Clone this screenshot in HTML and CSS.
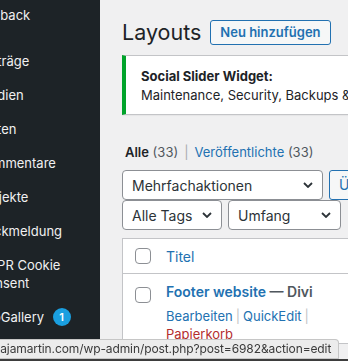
FILE: index.html
```html
<!DOCTYPE html>
<html lang="de">
  <head>
    <meta charset="UTF-8" />
    <meta name="viewport" content="width=device-width, initial-scale=1.0" />
    <title>Layouts ‹ Divi</title>
    <link rel="stylesheet" href="styles.css">
  </head>
  <body>
    <div class="admin">
      <nav class="sidebar">
        <ul class="menu">
          <li class="menu__item">Rollback</li>
          <li class="menu__separator"></li>
          <li class="menu__item">Beiträge</li>
          <li class="menu__item">Medien</li>
          <li class="menu__item">Seiten</li>
          <li class="menu__item">Kommentare</li>
          <li class="menu__item">Projekte</li>
          <li class="menu__item">Rückmeldung</li>
          <li class="menu__item menu__item--wrap">GDPR Cookie Consent</li>
          <li class="menu__item">FooGallery <span class="badge">1</span></li>
        </ul>
      </nav>

      <main class="content">
        <div class="title-row">
          <h1 class="title">Layouts</h1>
          <a href="#" class="page-title-action">Neu hinzufügen</a>
        </div>

        <div class="notice">
          <p class="notice__text"><strong>Social Slider Widget:</strong></p>
          <p class="notice__text">Maintenance, Security, Backups &amp; Performance</p>
        </div>

        <ul class="subsubsub">
          <li><a href="#" class="current">Alle</a> <span class="count">(33)</span></li>
          <li class="sep">|</li>
          <li><a href="#">Veröffentlichte</a> <span class="count">(33)</span></li>
        </ul>

        <div class="tablenav">
          <div class="tablenav__row">
            <div class="select select--bulk">
              <span>Mehrfachaktionen</span>
              <svg class="chevron" viewBox="0 0 10 6" width="10" height="6"><path d="M1 1l4 4 4-4" /></svg>
            </div>
            <a href="#" class="button">Übernehmen</a>
          </div>
          <div class="tablenav__row">
            <div class="select select--tags">
              <span>Alle Tags</span>
              <svg class="chevron" viewBox="0 0 10 6" width="10" height="6"><path d="M1 1l4 4 4-4" /></svg>
            </div>
            <div class="select select--scope">
              <span>Umfang</span>
              <svg class="chevron" viewBox="0 0 10 6" width="10" height="6"><path d="M1 1l4 4 4-4" /></svg>
            </div>
          </div>
        </div>

        <table class="list-table">
          <thead>
            <tr>
              <td class="check-column"><span class="checkbox"></span></td>
              <th class="column-title"><a href="#">Titel</a></th>
              <th class="column-author">Autor</th>
            </tr>
          </thead>
          <tbody>
            <tr>
              <td class="check-column"><span class="checkbox checkbox--row"></span></td>
              <td class="column-title">
                <strong><a href="#" class="row-title">Footer website</a> — Divi</strong>
                <div class="row-actions">
                  <a href="#">Bearbeiten</a><span class="sep">|</span><a href="#">QuickEdit</a><span class="sep">|</span> <a href="#" class="trash">Papierkorb</a>
                </div>
              </td>
              <td class="column-author">admin</td>
            </tr>
          </tbody>
        </table>
      </main>
    </div>

    <div class="status-bubble">
      <span>sajamartin.com/wp-admin/post.php?post=6982&amp;action=edit</span>
    </div>
  </body>
</html>
```

FILE: styles.css
```css
html,
body {
  height: 100%;
}

body {
  margin: 0;
  font-family: "Inter", "Liberation Sans", Arial, sans-serif;
  font-size: 13px;
  color: #3c434a;
  background: #f0f0f1;
  overflow: hidden;
}

a {
  color: #2271b1;
  text-decoration: none;
}

.admin {
  display: flex;
  height: 100%;
}

/* sidebar, scrolled so the icons are out of view */
.sidebar {
  flex: 0 0 100px;
  background: #1d2327;
  overflow: hidden;
}

.menu {
  list-style: none;
  margin: -2px 0 0 -22px;
  padding: 0;
  width: 150px;
}

.menu__item {
  padding: 8px 0;
  font-size: 13px;
  line-height: 18px;
  color: #f0f0f1;
  white-space: nowrap;
}

.menu__item--wrap {
  white-space: normal;
  width: 100px;
}

.menu__separator {
  height: 12px;
}

.badge {
  display: inline-block;
  width: 18px;
  height: 18px;
  margin-left: 5px;
  border-radius: 50%;
  background: #1a9fe0;
  color: #fff;
  font-size: 11px;
  font-weight: 600;
  line-height: 18px;
  text-align: center;
  vertical-align: top;
}

/* main column */
.content {
  flex: 0 0 440px;
  padding: 20px 0 0 22px;
}

.title-row {
  display: flex;
  align-items: center;
  gap: 9px;
  height: 24px;
}

.title {
  margin: 0;
  font-size: 21.5px;
  font-weight: 400;
  line-height: 24px;
  color: #1d2327;
}

.page-title-action {
  display: inline-block;
  padding: 0 9px;
  height: 23px;
  line-height: 23px;
  border: 1px solid #2271b1;
  border-radius: 3px;
  background: #f6f7f7;
  font-size: 13px;
  font-weight: 600;
}

.notice {
  margin-top: 11px;
  padding: 11px 12px 9px 15px;
  background: #fff;
  border: 1px solid #c3c4c7;
  border-left: 4px solid #00a32a;
  box-shadow: 0 1px 1px rgba(0, 0, 0, 0.04);
  white-space: nowrap;
}

.notice__text {
  margin: 0;
  line-height: 19px;
  color: #1d2327;
}

.subsubsub {
  display: flex;
  gap: 6px;
  list-style: none;
  margin: 24px 0 0;
  padding: 0 0 0 3px;
  line-height: 26px;
  font-size: 13px;
}

.subsubsub .current {
  color: #1d2327;
  font-weight: 600;
}

.subsubsub .count {
  color: #50575e;
}

.subsubsub .sep {
  color: #a7aaad;
}

.tablenav {
  margin-top: 5px;
}

.tablenav__row {
  display: flex;
  gap: 6px;
}

.select {
  display: flex;
  align-items: center;
  justify-content: space-between;
  box-sizing: border-box;
  height: 30px;
  padding: 0 9px 0 9px;
  background: #fff;
  border: 1px solid #8c8f94;
  border-radius: 4px;
  font-size: 14px;
  color: #2c3338;
}

.select--bulk {
  width: 201px;
}

.select--tags {
  width: 100px;
}

.select--scope {
  width: 113px;
}

.chevron {
  fill: none;
  stroke: #2c3338;
  stroke-width: 1.8;
}

.button {
  box-sizing: border-box;
  height: 30px;
  padding: 0 9px;
  line-height: 28px;
  border: 1px solid #2271b1;
  border-radius: 3px;
  background: #f6f7f7;
  font-size: 14px;
  white-space: nowrap;
}

.list-table {
  margin-top: 8px;
  width: 420px;
  border-collapse: collapse;
  background: #fff;
  border: 1px solid #c3c4c7;
  font-size: 14px;
}

.list-table th,
.list-table td {
  padding: 0;
  text-align: left;
  font-weight: 400;
  vertical-align: top;
}

.list-table thead tr {
  height: 35px;
  border-bottom: 1px solid #c3c4c7;
}

.list-table thead th,
.list-table thead td {
  vertical-align: middle;
}

.check-column {
  width: 16px;
  padding-left: 12px !important;
  padding-right: 15px !important;
}

.checkbox {
  display: block;
  box-sizing: border-box;
  width: 16px;
  height: 16px;
  border: 1px solid #8c8f94;
  border-radius: 4px;
  background: #fff;
}

.checkbox--row {
  margin-top: 13px;
}

.column-title {
  width: 160px;
}

.list-table tbody td {
  padding-top: 8px;
}

.list-table tbody .check-column {
  padding-top: 0;
}

.column-title strong {
  display: block;
  line-height: 20px;
  color: #50575e;
  font-weight: 600;
  white-space: nowrap;
}

.row-title {
  font-weight: 600;
}

.row-actions {
  margin-top: 5px;
  font-size: 13px;
  line-height: 18px;
}

.row-actions .sep {
  margin: 0 3px;
  color: #c3c4c7;
}

.row-actions .trash {
  color: #b32d2e;
}

.column-author {
  padding-left: 40px !important;
  color: #2271b1;
}

/* browser link preview in the bottom corner */
.status-bubble {
  position: fixed;
  left: 0;
  bottom: 2px;
  width: 339px;
  height: 20px;
  box-sizing: border-box;
  overflow: hidden;
  background: #ececec;
  border: 1px solid #c6c6c6;
  border-left: none;
  border-top-right-radius: 4px;
  font-size: 12px;
  line-height: 18px;
  color: #3a3a3a;
  white-space: nowrap;
}

.status-bubble span {
  display: block;
  margin-left: -6px;
  letter-spacing: -0.1px;
}

body::after {
  content: "";
  position: fixed;
  left: 0;
  right: 0;
  bottom: 0;
  height: 2px;
  background: #3d3d3d;
}
```
